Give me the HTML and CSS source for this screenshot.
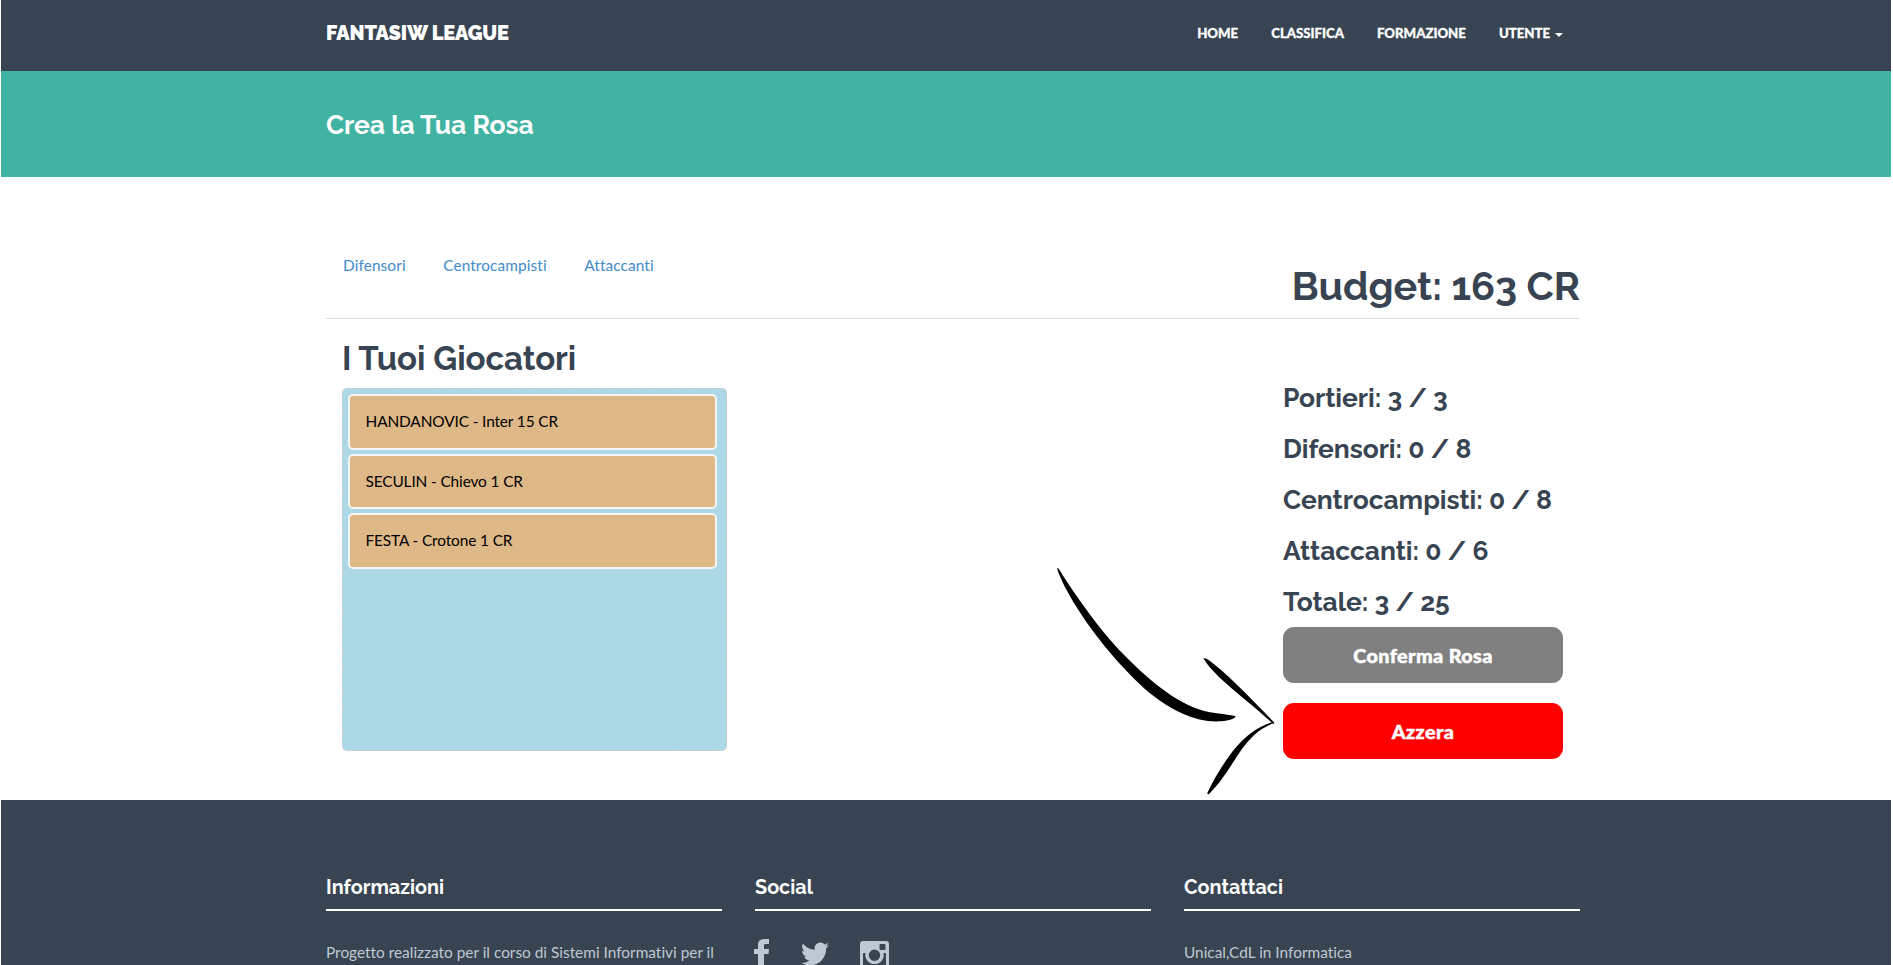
FILE: index.html
```html
<!DOCTYPE html>
<html lang="it">
<head>
<meta charset="utf-8">
<title>FantaSIW League</title>
<link rel="stylesheet" href="styles.css">
</head>
<body>
<header class="navbar">
  <div class="container navbar-row">
    <a class="brand">FANTASIW LEAGUE</a>
    <nav class="menu">
      <a>HOME</a>
      <a>CLASSIFICA</a>
      <a>FORMAZIONE</a>
      <a>UTENTE<span class="caret"></span></a>
    </nav>
  </div>
</header>
<section class="banner"><div class="container"><h2 class="banner-title">Crea la Tua Rosa</h2></div></section>
<main class="container main">
  <div class="top">
    <ul class="tabs"><li>Difensori</li><li>Centrocampisti</li><li>Attaccanti</li></ul>
    <h1 class="budget">Budget: 163 CR</h1>
  </div>
  <div class="content">
    <section class="squad">
      <h2 class="squad-title">I Tuoi Giocatori</h2>
      <div class="list">
        <div class="player">HANDANOVIC - Inter 15 CR</div>
        <div class="player">SECULIN - Chievo 1 CR</div>
        <div class="player">FESTA - Crotone 1 CR</div>
      </div>
    </section>
    <aside class="summary">
      <h3 class="count">Portieri: 3 / 3</h3>
      <h3 class="count">Difensori: 0 / 8</h3>
      <h3 class="count">Centrocampisti: 0 / 8</h3>
      <h3 class="count">Attaccanti: 0 / 6</h3>
      <h3 class="count">Totale: 3 / 25</h3>
      <button class="btn confirm">Conferma Rosa</button>
      <button class="btn reset">Azzera</button>
    </aside>
  </div>
</main>
<svg class="arrow" viewBox="0 0 780 780">
  <path d="M51 54C56 52 62 66 75 86C130 170 190 252 262 325C335 397 420 470 510 487C537 491 560 494 586 498C590 504 567 512 543 514C470 519 400 485 330 430C250 362 150 245 88 135C70 103 56 73 51 54Z"/>
  <path d="M490 325C498 322 512 334 526 346C580 390 645 458 703 518L700 522C650 475 590 430 536 380C518 362 501 345 490 325Z"/>
  <path d="M703 518C655 537 632 563 608 594C580 633 550 690 508 731Q502 735 502 729C518 694 542 653 566 620C600 572 645 532 696 517Z"/>
</svg>
<footer class="footer">
  <div class="container cols">
    <section class="col"><h4 class="col-title">Informazioni</h4><p class="col-text">Progetto realizzato per il corso di Sistemi Informativi per il</p></section>
    <section class="col"><h4 class="col-title">Social</h4>
      <div class="social">
        <svg class="fb" viewBox="0 0 15 30"><path d="M4 30V15H0V10H4V6C4 2 6.500 0 10.500 0H15V5H12C10.400 5 10 5.600 10 7V10H15L14.500 15H10V30Z"/></svg>
        <svg class="tw" viewBox="0 0 24 24"><path d="M23.954 4.569c-.885.389-1.83.654-2.825.775 1.014-.611 1.794-1.574 2.163-2.723-.951.555-2.005.959-3.127 1.184-.896-.959-2.173-1.559-3.591-1.559-2.717 0-4.92 2.203-4.92 4.917 0 .39.045.765.127 1.124C7.691 8.094 4.066 6.13 1.64 3.161c-.427.722-.666 1.561-.666 2.475 0 1.71.87 3.213 2.188 4.096-.807-.026-1.566-.248-2.228-.616v.061c0 2.385 1.693 4.374 3.946 4.827-.413.111-.849.171-1.296.171-.314 0-.615-.03-.916-.086.631 1.953 2.445 3.377 4.604 3.417-1.68 1.319-3.809 2.105-6.102 2.105-.39 0-.779-.023-1.17-.067 2.189 1.394 4.768 2.209 7.557 2.209 9.054 0 13.999-7.496 13.999-13.986 0-.209 0-.42-.015-.63.961-.689 1.8-1.56 2.46-2.548z"/></svg>
        <svg class="ig" viewBox="0 0 29 29"><path fill-rule="evenodd" d="M3 0H26Q29 0 29 3V26Q29 29 26 29H3Q0 29 0 26V3Q0 0 3 0ZM20.500 3Q19.500 3 19.500 4V8Q19.500 9 20.500 9H24.500Q25.500 9 25.500 8V4Q25.500 3 24.500 3ZM3 12V25H26V12H23.500A9.200 9.200 0 1 1 5.500 12ZM14.500 8.500A5.700 5.700 0 1 0 14.500 19.900A5.700 5.700 0 1 0 14.500 8.500Z"/></svg>
      </div>
    </section>
    <section class="col"><h4 class="col-title">Contattaci</h4><p class="col-text">Unical,CdL in Informatica</p></section>
  </div>
</footer>
</body>
</html>
```
FILE: styles.css
```css
* { box-sizing: border-box; }
html { background: #fff; }
body { margin: 0 2px 0 1px; height: 965px; overflow: hidden; font-family: Raleway, Lato, sans-serif; color: #384452; font-size: 15.4px; font-variant-ligatures: none; }
h1, h2, h3, h4, p, ul { margin: 0; padding: 0; font-weight: 700; white-space: nowrap; }
.container { width: 1254px; margin-left: 325px; }
.navbar { height: 71px; background: #384452; color: #fff; }
.navbar-row { display: flex; justify-content: space-between; padding-right: 17px; }
.brand { font-weight: 900; font-size: 20px; line-height: 66px; letter-spacing: -0.12px; white-space: nowrap; }
.menu { display: flex; gap: 33px; font-family: Lato, sans-serif; font-weight: 900; font-size: 13.2px; line-height: 66px; -webkit-text-stroke: 0.3px #fff; }
.caret { display: inline-block; margin-left: 5px; vertical-align: middle; border: 4px solid transparent; border-top-color: #fff; border-bottom: 0; }
.banner { height: 106px; background: #41b3a3; color: #fff; }
.banner-title { font-size: 26.4px; line-height: 108px; letter-spacing: -0.05px; }
.top { display: flex; justify-content: space-between; height: 142px; border-bottom: 1px solid #ddd; padding-top: 77px; }
.tabs { display: flex; list-style: none; gap: 37.500px; padding-left: 17px; font-family: Lato, sans-serif; font-size: 15.4px; line-height: 22px; letter-spacing: 0.1px; color: #428bca; }
.tabs li { font-weight: 400; }
.tabs { font-weight: 400; }
.budget { font-size: 39.6px; line-height: 64px; }
.content { display: flex; justify-content: space-between; height: 481px; padding: 20px 17px 0 16px; }
.squad { width: 385px; }
.squad-title { font-size: 33px; line-height: 40px; margin-bottom: 9px; letter-spacing: -0.05px; }
.list { height: 363px; background: lightblue; border: 1px dashed #ccc; border-radius: 5px; padding: 5px 9px 0 5px; display: flex; flex-direction: column; gap: 4px; }
.player { height: 55.500px; background: burlywood; border: 2px solid whitesmoke; border-radius: 5px; padding-left: 15.500px; font-family: Lato, sans-serif; font-size: 15.4px; line-height: 51px; letter-spacing: -0.12px; color: #000; }
.summary { width: 280px; padding-top: 33px; }
.count { font-size: 26.4px; line-height: 51px; letter-spacing: -0.04px; }
.btn { display: block; width: 280px; height: 56px; border: 0; border-radius: 11px; color: #fff; font-family: "Lato Black", Lato, sans-serif; font-weight: 900; font-size: 19.8px; line-height: 56px; letter-spacing: 0.4px; -webkit-text-stroke: 0.5px #fff; padding: 0; }
.confirm { background: gray; }
.reset { background: red; margin-top: 20px; }
.arrow { position: absolute; left: 1040px; top: 550px; width: 260px; height: 260px; }
.footer { height: 165px; background: #384452; color: #fff; }
.cols { display: grid; grid-template-columns: repeat(3, 396px); gap: 33px; padding-top: 70px; }
.col-title { font-size: 19.8px; line-height: 34px; height: 41px; border-bottom: 2px solid #fff; }
.col-text { margin-top: 30px; font-family: Lato, sans-serif; font-weight: 400; font-size: 15.4px; line-height: 22px; color: #bfc9d3; }
.social { display: flex; height: 60px; margin: 28px 0 0 -1px; fill: #bfc9d3; }
.fb { width: 15px; height: 30px; }
.tw { width: 28px; height: 28px; margin: 1px 0 0 32px; }
.ig { width: 29px; height: 29px; margin: 2px 0 0 31px; }
```
